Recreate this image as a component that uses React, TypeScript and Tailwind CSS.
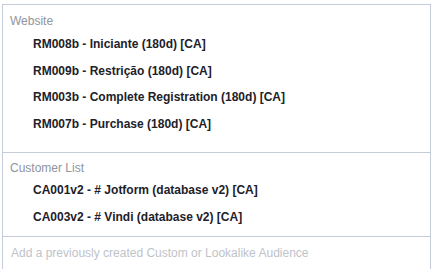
const websiteAudiences = [
  'RM008b - Iniciante (180d) [CA]',
  'RM009b - Restrição (180d) [CA]',
  'RM003b - Complete Registration (180d) [CA]',
  'RM007b - Purchase (180d) [CA]',
];

const customerLists = [
  'CA001v2 - # Jotform (database v2) [CA]',
  'CA003v2 - # Vindi (database v2) [CA]',
];

function AudienceRow({ name }: { name: string }) {
  return (
    <div className="h-[26.5px] flex items-center pl-[30px] text-[12px] font-bold text-[#1d2129] cursor-pointer">
      {name}
    </div>
  );
}

function GroupLabel({ children }: { children: string }) {
  return <div className="h-4 leading-4 pl-[7px] text-[12px] text-[#90949c]">{children}</div>;
}

export default function App() {
  return (
    <div className="w-[437px] h-[269px] overflow-hidden bg-white" style={{ fontFamily: "'Liberation Sans', Arial, sans-serif" }}>
      <div className="ml-[2px] mt-[4px] w-[429px] h-[300px] border-x border-t border-[#c5ccd9] bg-white">
        {/* Website */}
        <div className="pt-[8px] pb-[15px]">
          <GroupLabel>Website</GroupLabel>
          <div className="mt-[2px]">
            {websiteAudiences.map((a) => (
              <AudienceRow key={a} name={a} />
            ))}
          </div>
        </div>

        {/* Customer List */}
        <div className="border-t border-[#c5ccd9] pt-[7px] pb-[6px]">
          <GroupLabel>Customer List</GroupLabel>
          <div className="mt-[1px]">
            {customerLists.map((a) => (
              <AudienceRow key={a} name={a} />
            ))}
          </div>
        </div>

        {/* Search input */}
        <div className="border-t border-[#c5ccd9] pt-[8px] pl-[8px] h-[40px]">
          <div className="h-4 leading-4 text-[12px] text-[#bec3c9]">
            Add a previously created Custom or Lookalike Audience
          </div>
        </div>
      </div>
    </div>
  );
}
